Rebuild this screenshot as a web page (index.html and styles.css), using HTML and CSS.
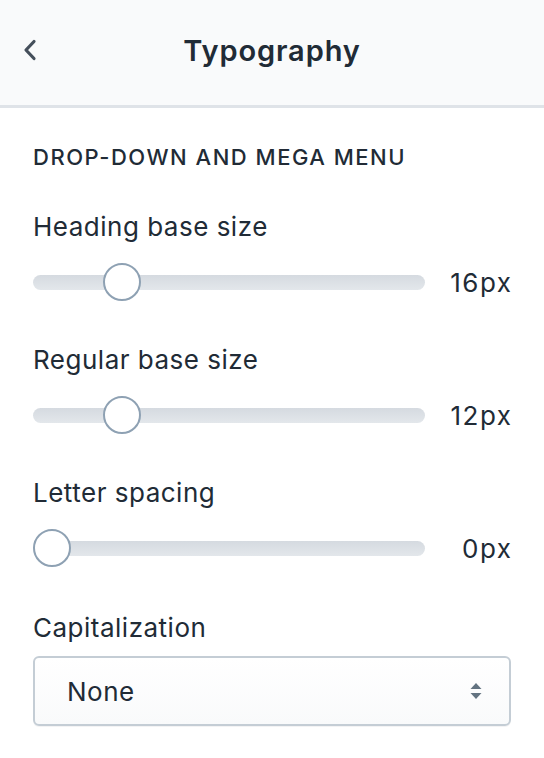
FILE: index.html
```html
<!DOCTYPE html>
<html>
<head>
<meta charset="utf-8">
<link rel="stylesheet" href="styles.css">
</head>
<body>
<header class="topbar">
  <button class="back" aria-label="Back">
    <svg width="14" height="22" viewBox="0 0 14 22"><path d="M11 2.5 L3 11 L11 19.5" fill="none" stroke="#454f5b" stroke-width="3.2" stroke-linecap="round" stroke-linejoin="round"/></svg>
  </button>
  <h1 class="title">Typography</h1>
  <span></span>
</header>
<main class="content">
  <h2 class="subheading">DROP-DOWN AND MEGA MENU</h2>

  <div class="field">
    <label class="label">Heading base size</label>
    <div class="range">
      <div class="track"><span class="thumb" style="left:70px"></span></div>
      <span class="value">16px</span>
    </div>
  </div>

  <div class="field">
    <label class="label">Regular base size</label>
    <div class="range">
      <div class="track"><span class="thumb" style="left:70px"></span></div>
      <span class="value">12px</span>
    </div>
  </div>

  <div class="field">
    <label class="label">Letter spacing</label>
    <div class="range">
      <div class="track"><span class="thumb" style="left:0px"></span></div>
      <span class="value">0px</span>
    </div>
  </div>

  <div class="field field-select">
    <label class="label">Capitalization</label>
    <div class="select">
      <span class="select-text">None</span>
      <svg class="arrows" width="12" height="18" viewBox="0 0 12 18"><path d="M6 1 L11.5 7 H0.5 Z" fill="#637381"/><path d="M6 17 L11.5 11 H0.5 Z" fill="#637381"/></svg>
    </div>
  </div>
</main>
</body>
</html>
```
FILE: styles.css
```css
* { box-sizing: border-box; }
html, body { margin: 0; padding: 0; background: #ffffff; }
body {
  font-family: "Inter", "Liberation Sans", sans-serif;
  color: #212b36;
  width: 544px;
  height: 758px;
  overflow: hidden;
}
.topbar {
  height: 108px;
  background: #f9fafb;
  border-bottom: 3px solid #dfe3e8;
  display: grid;
  grid-template-columns: 70px 1fr 70px;
  align-items: center;
  padding-bottom: 5px;
}
.back {
  background: none;
  border: 0;
  padding: 0 0 0 23px;
  margin: 0;
  display: flex;
  align-items: center;
  height: 30px;
  cursor: pointer;
}
.title {
  margin: 0;
  text-align: center;
  font-size: 29px;
  font-weight: 600;
  color: #212b36;
  letter-spacing: 0.9px;
}
.content {
  padding: 34px 33px 0 33px;
}
.subheading {
  margin: 0;
  font-size: 22px;
  line-height: 30px;
  font-weight: 500;
  letter-spacing: 1.5px;
  color: #212b36;
}
.field { margin-top: 37px; display: flex; flex-direction: column; }
.field + .field { margin-top: 40px; }
.field.field-select { margin-top: 42px; }
.label {
  font-size: 26px;
  line-height: 36px;
  letter-spacing: 0.5px;
  color: #212b36;
}
.range {
  margin-top: 17px;
  height: 40px;
  display: flex;
  align-items: center;
  gap: 20px;
}
.track {
  position: relative;
  flex: 1;
  height: 15px;
  border-radius: 8px;
  background: linear-gradient(#d5dae0, #e3e7eb);
}
.thumb {
  position: absolute;
  top: 50%;
  width: 38px;
  height: 38px;
  margin-top: -19px;
  border-radius: 50%;
  background: #ffffff;
  border: 2px solid #8ea1b3;
}
.value {
  width: 68px;
  text-align: right;
  font-size: 26px;
  letter-spacing: 1.5px;
  margin-right: -1.5px;
  color: #212b36;
}
.select {
  margin-top: 10px;
  height: 70px;
  border: 2px solid #c4cdd5;
  border-radius: 6px;
  background: linear-gradient(#ffffff, #f9fafb);
  display: flex;
  align-items: center;
  justify-content: space-between;
  padding: 0 27px 0 32px;
  box-shadow: 0 1px 0 rgba(22,29,37,0.05);
}
.select-text { font-size: 26px; letter-spacing: 0.5px; color: #212b36; }
```
